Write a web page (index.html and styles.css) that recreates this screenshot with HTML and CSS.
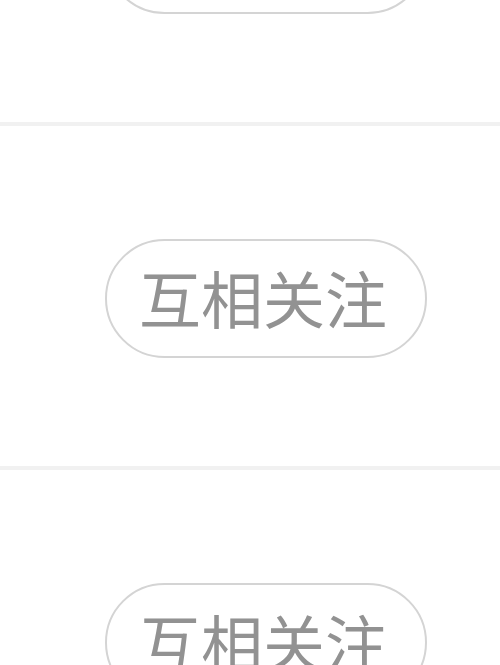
FILE: index.html
```html
<!DOCTYPE html>
<html lang="zh-CN">
<head>
    <meta charset="UTF-8">
    <meta name="viewport" content="width=device-width, initial-scale=1.0">
    <title>关注列表</title>
    <link rel="stylesheet" href="styles.css">
</head>
<body>
    <ul class="follow-list">
        <li class="follow-row"><button type="button" class="follow-btn">互相关注</button></li>
        <li class="follow-row"><button type="button" class="follow-btn">互相关注</button></li>
        <li class="follow-row"><button type="button" class="follow-btn">互相关注</button></li>
    </ul>
</body>
</html>
```

FILE: styles.css
```css
html, body {
    margin: 0;
    padding: 0;
    background-color: #fff;
    font-family: "Noto Sans CJK SC", "Noto Sans", sans-serif;
    overflow: hidden;
}
.follow-list {
    list-style: none;
    margin: -218px 0 0;
    padding: 0;
}
.follow-row {
    height: 227px;
    padding: 113px 0 0 105px;
    border-bottom: 4px solid #f1f1f1;
    display: flex;
    align-items: flex-start;
}
.follow-btn {
    width: 322px;
    height: 119px;
    border: 2px solid #d4d4d4;
    border-radius: 60px;
    background-color: #fff;
    color: #929292;
    font-family: inherit;
    font-size: 62px;
    line-height: 1;
    padding: 0 6px 4px 0;
    display: flex;
    justify-content: center;
    align-items: center;
    cursor: pointer;
}
```
